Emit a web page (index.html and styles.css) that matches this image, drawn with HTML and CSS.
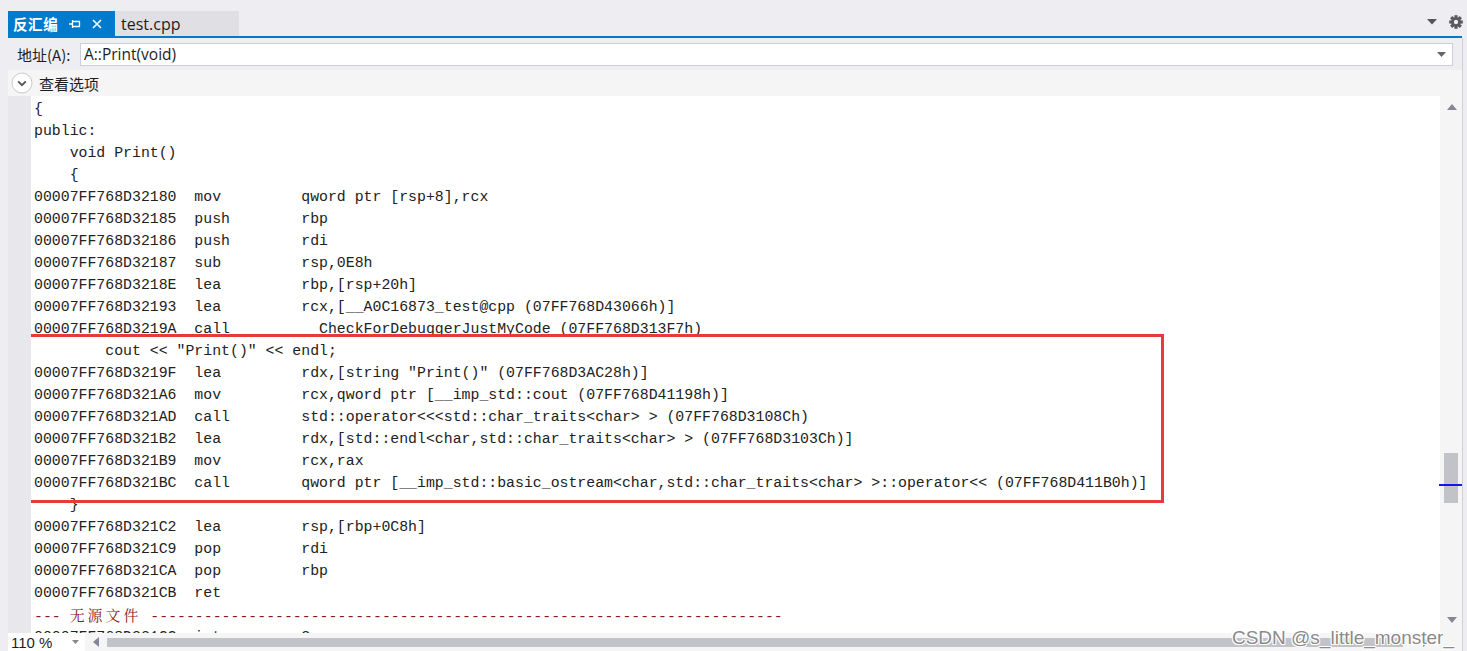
FILE: index.html
```html
<!DOCTYPE html>
<html lang="zh">
<head>
<meta charset="utf-8">
<title>反汇编</title>
<link rel="stylesheet" href="styles.css">
</head>
<body>
<div class="tabs">
  <div class="tab active">
    <span class="tab-title">反汇编</span>
    <svg class="pin" width="12" height="10" viewBox="0 0 12 10"><path d="M0 5H3.5M3.5 1V9M3.5 2.5H10.5V7.5H3.5" fill="none" stroke="#fff" stroke-width="1.3"/></svg>
    <svg class="close" width="10" height="10" viewBox="0 0 10 10"><path d="M1 1L9 9M9 1L1 9" stroke="#fff" stroke-width="1.6"/></svg>
  </div>
  <div class="tab inactive">test.cpp</div>
  <div class="tab-tools">
    <svg width="10" height="6" viewBox="0 0 10 6"><path d="M0 0H10L5 5.5Z" fill="#555"/></svg>
    <svg class="gear" width="14" height="14" viewBox="-7 -7 14 14">
      <g fill="#5a5a5a">
        <circle r="4.8"/>
        <rect x="-1.6" y="-6.8" width="3.2" height="13.6"/>
        <rect x="-1.6" y="-6.8" width="3.2" height="13.6" transform="rotate(45)"/>
        <rect x="-1.6" y="-6.8" width="3.2" height="13.6" transform="rotate(90)"/>
        <rect x="-1.6" y="-6.8" width="3.2" height="13.6" transform="rotate(135)"/>
      </g>
      <circle r="2.2" fill="#eeeef2"/>
    </svg>
  </div>
</div>
<div class="tabline"></div>
<div class="panel">
  <div class="addr-row">
    <span class="addr-label">地址(A):</span>
    <div class="addr-box">
      <span>A::Print(void)</span>
      <svg width="9" height="5" viewBox="0 0 9 5"><path d="M0 0H9L4.5 5Z" fill="#666"/></svg>
    </div>
  </div>
  <div class="opts-row">
    <svg class="chev" width="22" height="22" viewBox="-11 -11 22 22"><circle r="10" fill="#fff" stroke="#c9c9cf"/><path d="M-3.8 -1.6L0 2.2L3.8 -1.6" fill="none" stroke="#555" stroke-width="2"/></svg>
    <span class="opts-label">查看选项</span>
  </div>
  <div class="editor">
    <div class="gutter"></div>
    <div class="code">
<div class="ln">{</div>
<div class="ln">public:</div>
<div class="ln">    void Print()</div>
<div class="ln">    {</div>
<div class="ln">00007FF768D32180  mov         qword ptr [rsp+8],rcx</div>
<div class="ln">00007FF768D32185  push        rbp</div>
<div class="ln">00007FF768D32186  push        rdi</div>
<div class="ln">00007FF768D32187  sub         rsp,0E8h</div>
<div class="ln">00007FF768D3218E  lea         rbp,[rsp+20h]</div>
<div class="ln">00007FF768D32193  lea         rcx,[__A0C16873_test@cpp (07FF768D43066h)]</div>
<div class="ln">00007FF768D3219A  call        __CheckForDebuggerJustMyCode (07FF768D313F7h)</div>
<div class="ln">        cout &lt;&lt; "Print()" &lt;&lt; endl;</div>
<div class="ln">00007FF768D3219F  lea         rdx,[string "Print()" (07FF768D3AC28h)]</div>
<div class="ln">00007FF768D321A6  mov         rcx,qword ptr [__imp_std::cout (07FF768D41198h)]</div>
<div class="ln">00007FF768D321AD  call        std::operator&lt;&lt;&lt;std::char_traits&lt;char&gt; &gt; (07FF768D3108Ch)</div>
<div class="ln">00007FF768D321B2  lea         rdx,[std::endl&lt;char,std::char_traits&lt;char&gt; &gt; (07FF768D3103Ch)]</div>
<div class="ln">00007FF768D321B9  mov         rcx,rax</div>
<div class="ln">00007FF768D321BC  call        qword ptr [__imp_std::basic_ostream&lt;char,std::char_traits&lt;char&gt; &gt;::operator&lt;&lt; (07FF768D411B0h)]</div>
<div class="ln">    }</div>
<div class="ln">00007FF768D321C2  lea         rsp,[rbp+0C8h]</div>
<div class="ln">00007FF768D321C9  pop         rdi</div>
<div class="ln">00007FF768D321CA  pop         rbp</div>
<div class="ln">00007FF768D321CB  ret</div>
<div class="ln nosrc">--- <span class="cjk">无源文件</span> -----------------------------------------------------------------------</div>
<div class="ln">00007FF768D321CC  int         3</div>
      <div class="highlight-box"></div>
    </div>
    <div class="vscroll">
      <svg class="arrow-up" width="10" height="6" viewBox="0 0 10 6"><path d="M0 6H10L5 0Z" fill="#868699"/></svg>
      <div class="vthumb"></div>
      <div class="vmarker"></div>
      <svg class="arrow-down" width="10" height="6" viewBox="0 0 10 6"><path d="M0 0H10L5 6Z" fill="#868699"/></svg>
    </div>
  </div>
  <div class="bottom">
    <div class="zoom-box">
      <span>110 %</span>
      <svg width="7" height="4" viewBox="0 0 7 4"><path d="M0 0H7L3.5 4Z" fill="#888"/></svg>
    </div>
    <div class="hscroll">
      <svg width="6" height="10" viewBox="0 0 6 10"><path d="M6 0V10L0 5Z" fill="#868699"/></svg>
      <div class="hthumb"></div>
      <svg width="6" height="10" viewBox="0 0 6 10"><path d="M0 0V10L6 5Z" fill="#868699"/></svg>
    </div>
  </div>
  <div class="watermark">CSDN @s_little_monster_</div>
</div>
</body>
</html>
```
FILE: styles.css
```css
* { box-sizing: border-box; }
html, body { margin: 0; padding: 0; }
body {
  background: #eeeef2;
  width: 1467px;
  height: 651px;
  overflow: hidden;
  font-family: "Noto Sans CJK SC", "Noto Sans", sans-serif;
  color: #1e1e1e;
}
.tabs {
  height: 36px;
  display: flex;
  align-items: flex-end;
  padding-left: 8px;
  padding-right: 6px;
}
.tab {
  height: 25px;
  display: flex;
  align-items: center;
}
.tab.active {
  width: 107px;
  background: #007acc;
  padding-left: 5px;
}
.tab-title {
  color: #fff;
  font-size: 14.5px;
  font-weight: bold;
  letter-spacing: 0.6px;
}
.pin { margin-left: 11px; }
.close { margin-left: 11px; }
.tab.inactive {
  width: 124px;
  background: #e0e0e4;
  padding-left: 6px;
  font-family: "Open Sans", "Noto Sans", sans-serif;
  font-size: 16px;
  color: #1e1e1e;
}
.tab-tools {
  margin-left: auto;
  height: 25px;
  display: flex;
  align-items: center;
  gap: 12px;
  padding-bottom: 4px;
}
.gear { margin-right: -2px; }
.tabline {
  height: 2px;
  background: #007acc;
  margin: 0 5px 0 8px;
}
.panel {
  position: relative;
  margin: 0 4px 0 8px;
  border-right: 1px solid #cfcfdc;
}
.addr-row {
  height: 32px;
  display: flex;
  align-items: center;
  padding-left: 9px;
  padding-right: 9px;
  background: #eeeef2;
}
.addr-label {
  font-size: 15px;
  width: 63px;
  white-space: nowrap;
}
.addr-box {
  flex: 1;
  height: 23px;
  background: #fff;
  border: 1px solid #cccedb;
  display: flex;
  align-items: center;
  justify-content: space-between;
  padding: 0 6px 0 3px;
  font-size: 15.5px;
  font-family: "Open Sans", "Noto Sans", sans-serif;
}
.opts-row {
  height: 26px;
  display: flex;
  align-items: center;
  background: #f5f5f6;
  padding-left: 3px;
}
.opts-label {
  font-size: 15px;
  margin-left: 6px;
}
.editor {
  height: 537px;
  display: flex;
  overflow: hidden;
}
.gutter {
  width: 23px;
  background: #e8e8ec;
}
.code {
  position: relative;
  flex: 1;
  background: #fff;
  padding: 2px 0 0 3px;
  font-family: "Liberation Mono", "Noto Sans CJK SC", monospace;
  font-size: 14.85px;
  color: #222;
  overflow: hidden;
}
.ln {
  height: 22px;
  line-height: 22px;
  white-space: pre;
}
.nosrc { color: #8b1a1a; }
.cjk {
  font-family: "Noto Serif CJK SC", "Noto Sans CJK SC", sans-serif;
  letter-spacing: 3.1px;
  font-size: 14.85px;
}
.highlight-box {
  position: absolute;
  left: -11px;
  top: 238px;
  width: 1144px;
  height: 169px;
  border: 3px solid #e8393b;
}
.vscroll {
  position: relative;
  width: 22px;
  background: #f5f5f6;
}
.arrow-up { position: absolute; left: 7px; top: 8px; }
.arrow-down { position: absolute; left: 7px; top: 521px; }
.vthumb {
  position: absolute;
  left: 4px;
  top: 357px;
  width: 14px;
  height: 50px;
  background: #c2c3c9;
}
.vmarker {
  position: absolute;
  left: -1px;
  top: 388px;
  width: 23px;
  height: 2px;
  background: #1818e0;
}
.bottom {
  height: 18px;
  display: flex;
  background: #f5f5f6;
}
.zoom-box {
  width: 77px;
  height: 18px;
  background: #fff;
  display: flex;
  align-items: center;
  justify-content: space-between;
  padding: 0 6px 0 3px;
  font-family: "Liberation Sans", sans-serif;
  font-size: 15px;
  color: #1e1e1e;
}
.hscroll {
  flex: 1;
  display: flex;
  align-items: center;
  gap: 8px;
  padding: 0 33px 0 8px;
}
.hthumb {
  flex: 1;
  height: 9px;
  background: #c2c3c9;
  margin-right: 12px;
}
.watermark {
  position: absolute;
  right: 8px;
  bottom: 2px;
  font-family: "Liberation Sans", sans-serif;
  font-size: 19px;
  color: #8a8a8a;
  text-shadow: 0 0 1px #fff, 1px 1px 0 #fff, -1px -1px 0 #fff, 1px -1px 0 #fff, -1px 1px 0 #fff;
}
```
